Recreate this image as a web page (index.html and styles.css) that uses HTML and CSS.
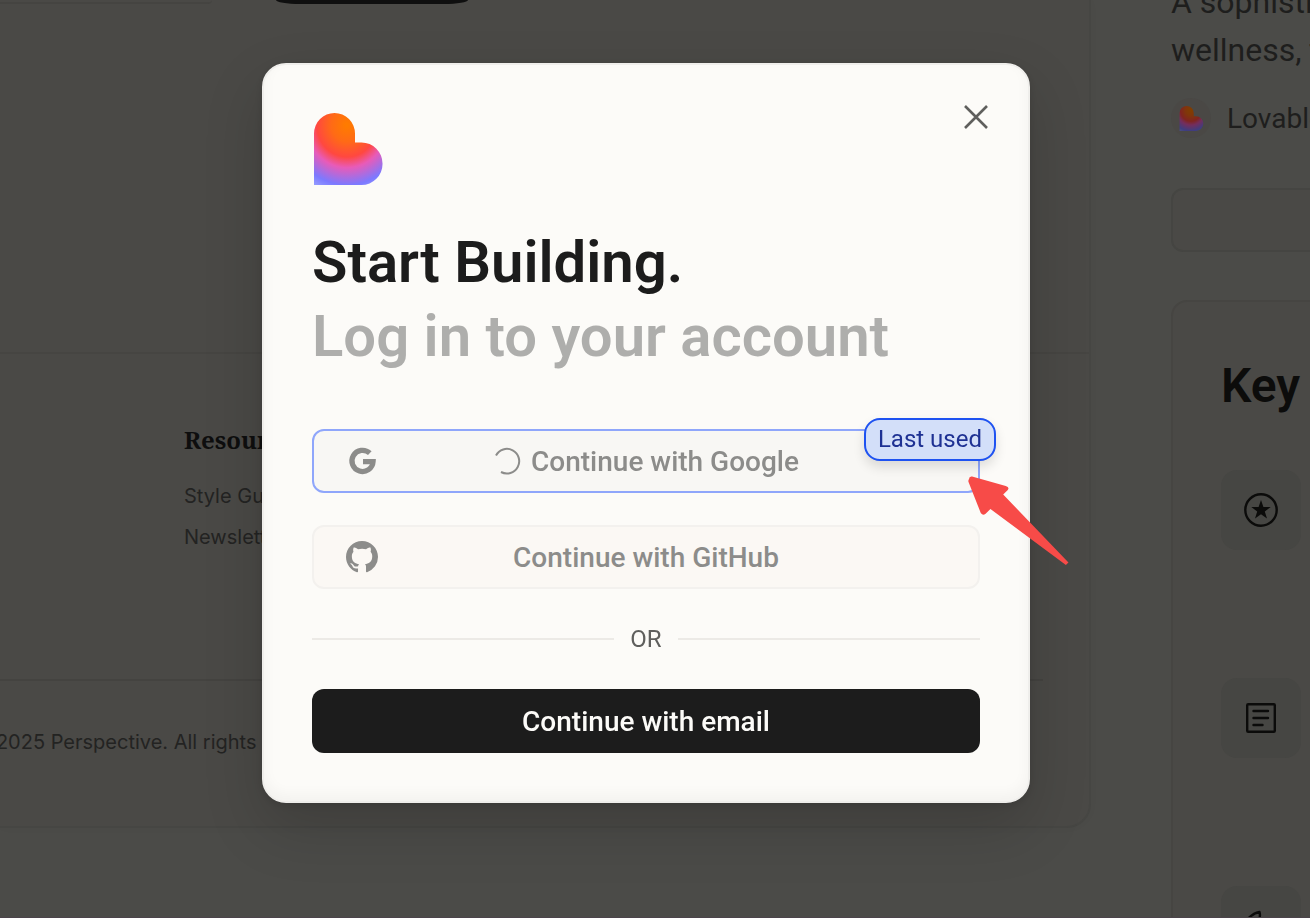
FILE: index.html
```html
<!DOCTYPE html>
<html lang="en">
  <head>
    <meta charset="UTF-8" />
    <meta name="viewport" content="width=device-width, initial-scale=1.0" />
    <title>Log in</title>
    <link rel="stylesheet" href="styles.css">
  </head>
  <body>
    <!-- page behind the dialog -->
    <div class="page">
      <main class="preview">
        <div class="newsletter">
          <div class="field"></div>
          <div class="pill"></div>
        </div>
        <footer class="footer">
          <div class="links">
            <h2>Resources</h2>
            <a href="#">Style Guide</a>
            <a href="#">Newsletter</a>
          </div>
          <p class="copyright"><span>© 2025 Perspective. All rights reserved.</span></p>
        </footer>
      </main>
      <aside class="details">
        <p class="summary">A sophisticated<br>wellness, travel</p>
        <div class="author">
          <span class="avatar">
            <svg width="25" height="25" viewBox="0 0 69 72">
              <use href="#heart" />
            </svg>
          </span>
          <span>Lovable</span>
        </div>
        <div class="box"></div>
        <section class="features">
          <h2>Key features</h2>
          <div class="tile">
            <svg width="36" height="36" viewBox="0 0 36 36">
              <circle cx="18" cy="18" r="15.7" fill="none" stroke="#0b0b0a" stroke-width="2.4" />
              <path d="M18 8l2.4 7h7.3l-5.9 4.4 2.2 7.2-6-4.4-6 4.4 2.2-7.2L8.3 15h7.3z" fill="#0b0b0a" />
            </svg>
          </div>
          <div class="tile">
            <svg width="36" height="36" viewBox="0 0 36 36" fill="none" stroke="#0b0b0a" stroke-width="2.4" stroke-linecap="round">
              <rect x="4.2" y="4.2" width="27.6" height="27.6" rx="1" />
              <path d="M10.500 11h14.500M10.500 18h14.500M10.500 25h9" />
            </svg>
          </div>
          <div class="tile">
            <svg width="36" height="36" viewBox="0 0 36 36" fill="none" stroke="#0b0b0a" stroke-width="2.4" stroke-linejoin="round">
              <path d="M3 13C7 8 11 5 16.5 4C18 9 16 14 12 20z" />
            </svg>
          </div>
        </section>
      </aside>
    </div>

    <!-- login dialog -->
    <div class="overlay">
      <div class="dialog" role="dialog" aria-labelledby="title">
        <button class="close" aria-label="Close">
          <svg width="26" height="26" viewBox="0 0 26 26">
            <path d="M2 2l22 22M24 2L2 24" stroke="#5f5f5d" stroke-width="2.6" fill="none" />
          </svg>
        </button>
        <svg class="logo" width="72" height="72" viewBox="0 0 72 72">
          <defs>
            <radialGradient id="glow" gradientUnits="userSpaceOnUse" cx="0" cy="0" r="1" gradientTransform="translate(33 12) scale(72 76)">
              <stop offset="0.02" stop-color="#ff7b00" />
              <stop offset="0.22" stop-color="#ff6a16" />
              <stop offset="0.42" stop-color="#ff4840" />
              <stop offset="0.56" stop-color="#e85bb8" />
              <stop offset="0.79" stop-color="#7c79ff" />
              <stop offset="1" stop-color="#a7b8ff" />
            </radialGradient>
            <path id="heart" d="M0 72V20.5A20.5 20.5 0 0 1 41 20.5V29.5H47.5A21 21.2 0 0 1 47.5 72z" fill="url(#glow)" />
          </defs>
          <use href="#heart" />
        </svg>
        <h1 class="title" id="title">Start Building.<span>Log in to your account</span></h1>
        <div class="providers">
          <button class="provider google">
            <svg class="icon" width="32" height="32" viewBox="0 0 32 32">
              <path d="M23.8 8.2A10.6 10.6 0 1 0 27.1 16.6H17" fill="none" stroke="#8c8c8a" stroke-width="5.2" />
            </svg>
            <svg class="spinner" width="28" height="28" viewBox="0 0 28 28">
              <path d="M3 8.5A12.3 12.3 0 1 1 8 25" fill="none" stroke="#8c8c8a" stroke-width="2" />
            </svg>
            Continue with Google
            <span class="badge">Last used</span>
            <svg class="arrow" width="104" height="92" viewBox="0 0 102 92" preserveAspectRatio="none">
              <path d="M2 4Q2 1 5 1.500L38 11Q42 12 40 15L35.500 19.500L99.500 87.500L97 90L23 34L18 39Q15.500 41 13.500 38L1.500 7Q1 5.500 2 4z" fill="#f74b48" />
            </svg>
          </button>
          <button class="provider github">
            <svg class="icon" width="32" height="32" viewBox="0 0 16 16">
              <path fill="#8c8c8a" d="M8 0C3.58 0 0 3.58 0 8c0 3.54 2.29 6.53 5.47 7.59.4.07.55-.17.55-.38 0-.19-.01-.82-.01-1.49-2.01.37-2.53-.49-2.69-.94-.09-.23-.48-.94-.82-1.13-.28-.15-.68-.52-.01-.53.63-.01 1.08.58 1.23.82.72 1.21 1.87.87 2.33.66.07-.52.28-.87.51-1.07-1.78-.2-3.64-.89-3.64-3.95 0-.87.31-1.59.82-2.15-.08-.2-.36-1.02.08-2.12 0 0 .67-.21 2.2.82.64-.18 1.32-.27 2-.27s1.36.09 2 .27c1.53-1.04 2.2-.82 2.2-.82.44 1.1.16 1.92.08 2.12.51.56.82 1.27.82 2.15 0 3.07-1.87 3.75-3.65 3.95.29.25.54.73.54 1.48 0 1.07-.01 1.93-.01 2.2 0 .21.15.46.55.38A8.01 8.01 0 0 0 16 8c0-4.42-3.58-8-8-8z" />
            </svg>
            Continue with GitHub
          </button>
        </div>
        <div class="divider">OR</div>
        <button class="email">Continue with email</button>
      </div>
    </div>
  </body>
</html>
```

FILE: styles.css
```css
* {
  margin: 0;
  padding: 0;
  box-sizing: border-box;
}

body {
  height: 100vh;
  overflow: hidden;
  background-color: #4b4b48;
  border-bottom: 1px solid #4c444b;
  font-family: Roboto, "Liberation Sans", sans-serif;
}

button {
  font-family: inherit;
  cursor: pointer;
}

.page {
  height: 100%;
  display: flex;
  gap: 80px;
  overflow: hidden;
}

/* left side */
.preview {
  flex: 1;
  align-self: flex-start;
  border: 2px solid #464643;
  border-top: none;
  border-left: none;
  border-radius: 0 0 24px 0;
  background-color: #4a4946;
  box-shadow: 0 0 12px rgba(0, 0, 0, 0.02);
  font-family: Inter, sans-serif;
}

.newsletter {
  height: 352px;
  display: flex;
  gap: 64px;
}

.field {
  width: 212px;
  height: 4px;
  border-bottom: 2px solid #454441;
  border-radius: 0 0 32px 0;
}

.pill {
  width: 192px;
  height: 4px;
  background-color: #0f0f0f;
  border-radius: 0 0 24px 24px / 0 0 4px 4px;
}

.footer {
  border-top: 2px solid #464542;
}

.links {
  height: 325px;
  padding: 72px 0 0 184px;
  display: flex;
  flex-direction: column;
  gap: 16px;
}

.links h2 {
  margin-bottom: 14px;
  font: bold 24px/28px "Noto Serif", "Liberation Serif", serif;
  color: #0e0e0e;
}

.links a {
  font-size: 20px;
  line-height: 25px;
  color: #232322;
  text-decoration: none;
}

.copyright {
  height: 147px;
  margin-right: 46px;
  padding-top: 47px;
  border-top: 2px solid #444340;
  font-size: 20px;
  line-height: 28px;
  color: #232322;
}

.copyright span {
  margin-left: -28px;
}

/* right side */
.details {
  width: 139px;
  white-space: nowrap;
  color: #1e1e1d;
}

.summary {
  margin-top: -22px;
  font-size: 32px;
  line-height: 48px;
}

.author {
  margin-top: 24px;
  display: flex;
  align-items: center;
  gap: 16px;
  font-size: 28px;
}

.avatar {
  width: 40px;
  height: 40px;
  flex-shrink: 0;
  display: flex;
  align-items: center;
  justify-content: center;
  border-radius: 50%;
  background-color: #4a4845;
}

.avatar svg {
  filter: brightness(0.5);
}

.box {
  width: 600px;
  height: 64px;
  margin-top: 50px;
  border: 2px solid #454542;
  border-radius: 12px;
  background-color: #4a4946;
}

.features {
  width: 600px;
  height: 700px;
  margin-top: 48px;
  padding: 48px;
  border: 2px solid #464542;
  border-radius: 16px;
  background-color: #4a4946;
}

.features h2 {
  margin-bottom: 48px;
  font-size: 48px;
  font-weight: 600;
  line-height: 72px;
  color: #0c0c0b;
}

.tile {
  width: 80px;
  height: 80px;
  margin-bottom: 128px;
  display: flex;
  align-items: center;
  justify-content: center;
  border-radius: 16px;
  background-color: #464643;
}

/* dialog */
.overlay {
  position: fixed;
  inset: 0;
  display: flex;
  align-items: center;
  justify-content: center;
  padding: 0 18px 52px 0;
}

.dialog {
  position: relative;
  width: 768px;
  padding: 48px;
  border: 2px solid #efeeeb;
  border-radius: 24px;
  background-color: #fcfbf8;
  box-shadow: 0 24px 60px rgba(0, 0, 0, 0.16), 0 2px 10px rgba(0, 0, 0, 0.12),
    inset 0 -6px 14px rgba(0, 0, 0, 0.04);
}

.close {
  position: absolute;
  top: 39px;
  right: 39px;
  width: 26px;
  height: 26px;
  border: none;
  background: none;
}

.logo {
  display: block;
  margin-left: 2px;
}

.title {
  margin-top: 40px;
  font-size: 58px;
  font-weight: 600;
  line-height: 74px;
  color: #1c1c1c;
}

.title span {
  display: block;
  color: #aeaeac;
}

.providers {
  margin-top: 56px;
  display: flex;
  flex-direction: column;
  gap: 32px;
}

.provider,
.email {
  width: 100%;
  height: 64px;
  display: flex;
  align-items: center;
  justify-content: center;
  border-radius: 12px;
  font-size: 28px;
  font-weight: 500;
}

.provider {
  position: relative;
  gap: 10px;
  color: #8c8c8a;
}

.google {
  border: 2px solid #8fa6fb;
  background-color: #f8f7f4;
}

.github {
  border: 2px solid #f3f1ee;
  background-color: #fbf8f4;
}

.icon {
  position: absolute;
  left: 32px;
}

.badge {
  position: absolute;
  top: -13px;
  right: -18px;
  padding: 0 12px;
  border: 2px solid #1e52f1;
  border-radius: 16px;
  background-color: #d3dff9;
  box-shadow: 0 6px 12px rgba(0, 0, 0, 0.12);
  color: #1e3193;
  font-size: 24px;
  font-weight: 400;
  line-height: 39px;
}

.arrow {
  position: absolute;
  top: 44px;
  right: -93px;
}

.divider {
  margin: 36px 0;
  display: flex;
  align-items: center;
  gap: 16px;
  color: #5f5f5d;
  font-size: 24px;
  line-height: 28px;
}

.divider::before,
.divider::after {
  content: "";
  flex: 1;
  height: 2px;
  background-color: #eceae6;
}

.email {
  border: none;
  background-color: #1c1c1c;
  color: #fcfbf8;
}
```
